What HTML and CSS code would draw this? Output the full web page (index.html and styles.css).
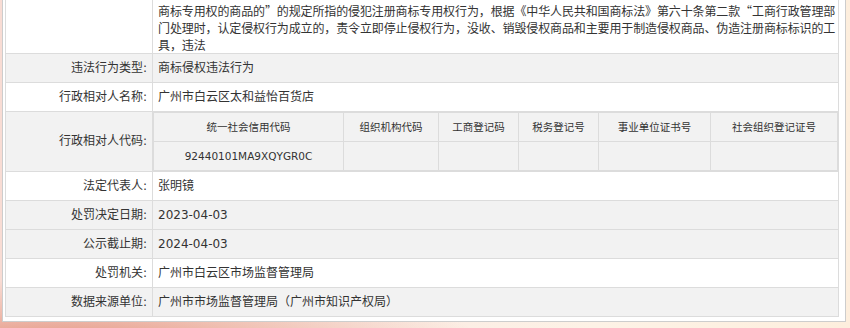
FILE: index.html
```html
<!DOCTYPE html>
<html>
<head>
<meta http-equiv="Content-Type" content="text/html; charset=utf-8"/>
<title>行政处罚信息</title>
<link rel="stylesheet" href="styles.css">
</head>
<body>
<div class="panel">
<table class="info">
  <colgroup><col class="label-col"><col></colgroup>
  <tr class="long">
    <th></th>
    <td>商标专用权的商品的”的规定所指的侵犯注册商标专用权行为，根据《中华人民共和国商标法》第六十条第二款“工商行政管理部门处理时，认定侵权行为成立的，责令立即停止侵权行为，没收、销毁侵权商品和主要用于制造侵权商品、伪造注册商标标识的工具，违法</td>
  </tr>
  <tr class="alt">
    <th>违法行为类型:</th>
    <td>商标侵权违法行为</td>
  </tr>
  <tr>
    <th>行政相对人名称:</th>
    <td>广州市白云区太和益怡百货店</td>
  </tr>
  <tr class="alt">
    <th>行政相对人代码:</th>
    <td class="nest">
      <table class="codes">
        <colgroup>
          <col style="width:190px"><col style="width:95px"><col style="width:80px">
          <col style="width:80px"><col style="width:112px"><col>
        </colgroup>
        <tr>
          <th>统一社会信用代码</th>
          <th>组织机构代码</th>
          <th>工商登记码</th>
          <th>税务登记号</th>
          <th>事业单位证书号</th>
          <th>社会组织登记证号</th>
        </tr>
        <tr>
          <td>92440101MA9XQYGR0C</td>
          <td></td>
          <td></td>
          <td></td>
          <td></td>
          <td></td>
        </tr>
      </table>
    </td>
  </tr>
  <tr>
    <th>法定代表人:</th>
    <td>张明镜</td>
  </tr>
  <tr class="alt">
    <th>处罚决定日期:</th>
    <td>2023-04-03</td>
  </tr>
  <tr class="alt">
    <th>公示截止期:</th>
    <td>2024-04-03</td>
  </tr>
  <tr>
    <th>处罚机关:</th>
    <td>广州市白云区市场监督管理局</td>
  </tr>
  <tr class="alt">
    <th>数据来源单位:</th>
    <td>广州市市场监督管理局（广州市知识产权局）</td>
  </tr>
</table>
</div>
</body>
</html>
```

FILE: styles.css
```css
html, body {
  margin: 0;
  height: 328px;
  overflow: hidden;
}

body {
  font-family: "DejaVu Sans", "Noto Sans CJK SC", sans-serif;
  font-size: 12px;
  color: #333;
  background:
    radial-gradient(ellipse 420px 60px at 60px 340px, #e59a88 0%, rgba(233, 166, 148, 0.6) 45%, rgba(250, 230, 220, 0) 100%),
    linear-gradient(to right, #f8dcd4 0%, #fbeae3 40%, #fdf2e6 70%, #fdeedd 100%);
}

/* white sheet holding the detail table */
.panel {
  margin-left: 2px;
  width: 836px;
  padding: 0 4px 4px 2px;
  background: #fff;
  border: 1px solid #cdcdcd;
  border-top: none;
}

.info {
  width: 834px;
  border-collapse: collapse;
  table-layout: fixed;
  border: 1px solid #dcdcdc;
  border-top: none;
}

.info .label-col {
  width: 147px;
}

.info > tbody > tr > th,
.info > tbody > tr > td {
  height: 28px;
  padding: 0 5px;
  border: 1px solid #dcdcdc;
  line-height: 17px;
  vertical-align: middle;
}

.info > tbody > tr > th {
  font-weight: normal;
  text-align: right;
  white-space: nowrap;
}

.info > tbody > tr.alt > th,
.info > tbody > tr.alt > td {
  background: #f2f2f2;
}

.info > tbody > tr.long > th,
.info > tbody > tr.long > td {
  border-top: none;
  padding-top: 2px;
  padding-bottom: 0;
  vertical-align: bottom;
}

/* long decision text: full-width quotes, slightly tightened */
.info > tbody > tr.long > td {
  padding-right: 0;
  font-family: "Noto Sans CJK SC", sans-serif;
  letter-spacing: -0.12px;
}

.info > tbody > tr > td.nest {
  padding: 0;
}

/* registration numbers grid inside the code row */
.codes {
  width: 100%;
  border-collapse: collapse;
  table-layout: fixed;
  border: 1px solid #dcdcdc;
  font-size: 10.5px;
}

.codes th,
.codes td {
  height: 28px;
  padding: 0;
  border: 1px solid #dcdcdc;
  background: #f2f2f2;
  text-align: center;
  font-weight: normal;
  vertical-align: middle;
}
```
